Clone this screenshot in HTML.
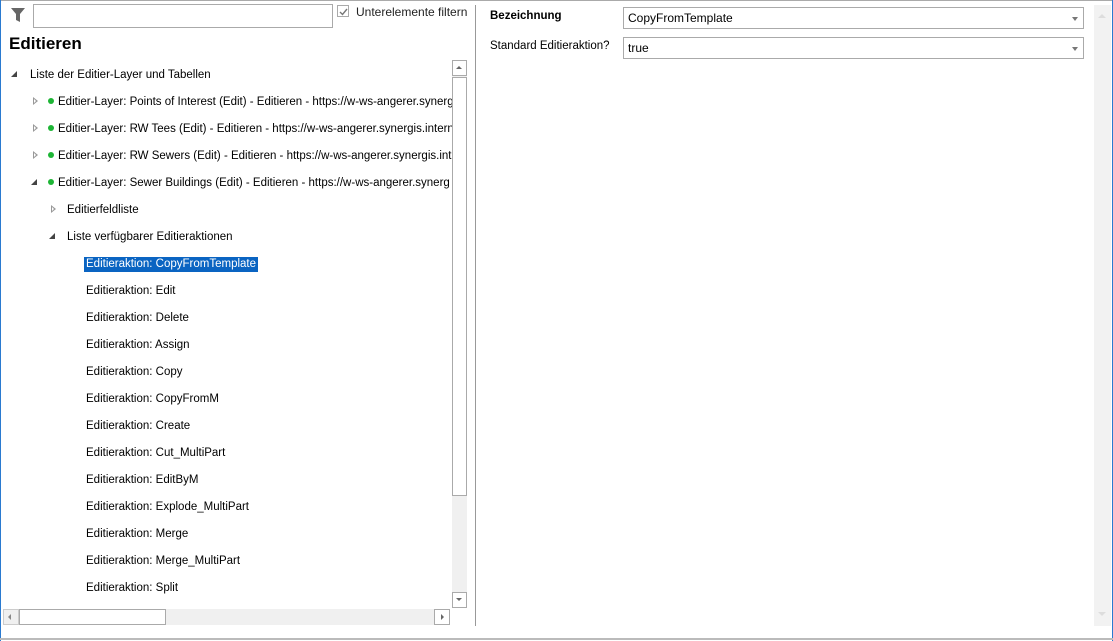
<!DOCTYPE html>
<html><head><meta charset="utf-8"><style>
*{margin:0;padding:0;box-sizing:border-box}
body{width:1113px;height:641px;background:#fff;position:relative;overflow:hidden;font-family:"Liberation Sans",sans-serif;font-size:11.5px;color:#000}
.a{position:absolute}
.row{position:absolute;white-space:nowrap;line-height:16px}
.t .row{margin-top:1px}
.dot{display:inline-block;width:6px;height:6px;border-radius:50%;background:#1db535;margin-right:4px;vertical-align:1px}
.tri{position:absolute;width:0;height:0}
.exp{border-left:6px solid transparent;border-bottom:6px solid #444}
.col{border-top:4px solid transparent;border-bottom:4px solid transparent;border-left:5px solid #999}
.col:after{content:"";position:absolute;left:-4px;top:-2px;border-top:2px solid transparent;border-bottom:2px solid transparent;border-left:2.5px solid #fff}
.sel{background:#0a64c2;color:#fff;padding:0 2px;margin-left:-2px;display:inline-block;line-height:15px}
.combo{position:absolute;border:1px solid #aaa;height:22px;padding-left:4px;line-height:20px;font-size:12px}
.combo:after{content:"";position:absolute;right:5px;top:9px;border-left:3px solid transparent;border-right:3px solid transparent;border-top:4px solid #777}
</style></head><body>
<div class="a" style="left:0;top:0;width:1113px;height:1px;background:#aaa"></div>
<div class="a" style="left:0;top:0;width:1px;height:641px;background:#2a7ad0"></div>
<div class="a" style="right:0;top:0;width:1px;height:641px;background:#2a7ad0"></div>
<div class="a" style="left:0;top:638px;width:1113px;height:2px;background:#bbb"></div>
<svg class="a" style="left:10px;top:6px" width="16" height="18"><path d="M1 2h14l-5 6v8l-4-2v-6z" fill="#666"/></svg>
<div class="a" style="left:33px;top:4px;width:300px;height:24px;border:1px solid #aaa"></div>
<div class="a" style="left:337px;top:5px;width:12px;height:12px;border:1px solid #aaa"></div>
<svg class="a" style="left:338px;top:6px" width="11" height="11"><path d="M2 6l2.5 2.5L9 3" stroke="#777" stroke-width="1.4" fill="none"/></svg>
<div class="row" style="left:356px;top:4px;font-size:12px;color:#222">Unterelemente filtern</div>
<div class="row" style="left:9px;top:34px;font-size:17px;font-weight:bold;line-height:20px">Editieren</div>
<div class="t">
<div class="tri exp" style="left:11px;top:71px"></div>
<div class="row" style="left:30px;top:66px">Liste der Editier-Layer und Tabellen</div>
<div class="tri col" style="left:33px;top:97px"></div>
<div class="row" style="left:48px;top:93px"><span class="dot"></span>Editier-Layer: Points of Interest (Edit) - Editieren - https://w-ws-angerer.synerg</div>
<div class="tri col" style="left:33px;top:124px"></div>
<div class="row" style="left:48px;top:120px"><span class="dot"></span>Editier-Layer: RW Tees (Edit) - Editieren - https://w-ws-angerer.synergis.intern</div>
<div class="tri col" style="left:33px;top:151px"></div>
<div class="row" style="left:48px;top:147px"><span class="dot"></span>Editier-Layer: RW Sewers (Edit) - Editieren - https://w-ws-angerer.synergis.int</div>
<div class="tri exp" style="left:31px;top:179px"></div>
<div class="row" style="left:48px;top:174px"><span class="dot"></span>Editier-Layer: Sewer Buildings (Edit) - Editieren - https://w-ws-angerer.synerg</div>
<div class="tri col" style="left:51px;top:205px"></div>
<div class="row" style="left:67px;top:201px">Editierfeldliste</div>
<div class="tri exp" style="left:49px;top:233px"></div>
<div class="row" style="left:67px;top:228px">Liste verfügbarer Editieraktionen</div>
<div class="row" style="left:86px;top:255px"><span class="sel">Editieraktion: CopyFromTemplate</span></div>
<div class="row" style="left:86px;top:282px">Editieraktion: Edit</div>
<div class="row" style="left:86px;top:309px">Editieraktion: Delete</div>
<div class="row" style="left:86px;top:336px">Editieraktion: Assign</div>
<div class="row" style="left:86px;top:363px">Editieraktion: Copy</div>
<div class="row" style="left:86px;top:390px">Editieraktion: CopyFromM</div>
<div class="row" style="left:86px;top:417px">Editieraktion: Create</div>
<div class="row" style="left:86px;top:444px">Editieraktion: Cut_MultiPart</div>
<div class="row" style="left:86px;top:471px">Editieraktion: EditByM</div>
<div class="row" style="left:86px;top:498px">Editieraktion: Explode_MultiPart</div>
<div class="row" style="left:86px;top:525px">Editieraktion: Merge</div>
<div class="row" style="left:86px;top:552px">Editieraktion: Merge_MultiPart</div>
<div class="row" style="left:86px;top:579px">Editieraktion: Split</div>
</div>
<div class="a" style="left:452px;top:60px;width:15px;height:548px;background:#f0f0f0"></div>
<div class="a" style="left:452px;top:60px;width:15px;height:16px;border:1px solid #aaa;background:#fff"></div>
<div class="a" style="left:456px;top:66px;border-left:3px solid transparent;border-right:3px solid transparent;border-bottom:3px solid #666"></div>
<div class="a" style="left:452px;top:77px;width:15px;height:419px;border:1px solid #aaa;background:#fff"></div>
<div class="a" style="left:452px;top:592px;width:15px;height:16px;border:1px solid #aaa;background:#fff"></div>
<div class="a" style="left:456px;top:598px;border-left:3px solid transparent;border-right:3px solid transparent;border-top:3px solid #666"></div>
<div class="a" style="left:3px;top:609px;width:447px;height:16px;background:#f0f0f0"></div>
<div class="a" style="left:3px;top:609px;width:16px;height:16px;border:1px solid #ccc"></div>
<div class="a" style="left:8px;top:614px;border-top:3px solid transparent;border-bottom:3px solid transparent;border-right:3px solid #888"></div>
<div class="a" style="left:19px;top:609px;width:147px;height:16px;border:1px solid #aaa;background:#fff"></div>
<div class="a" style="left:434px;top:609px;width:16px;height:16px;border:1px solid #aaa;background:#fff"></div>
<div class="a" style="left:441px;top:614px;border-top:3px solid transparent;border-bottom:3px solid transparent;border-left:3px solid #666"></div>
<div class="a" style="left:475px;top:5px;width:1px;height:621px;background:#999"></div>
<div class="row" style="left:490px;top:8px;font-weight:bold;font-size:11.5px">Bezeichnung</div>
<div class="combo" style="left:623px;top:7px;width:461px">CopyFromTemplate</div>
<div class="row" style="left:490px;top:38px;font-size:11.5px">Standard Editieraktion?</div>
<div class="combo" style="left:623px;top:37px;width:461px">true</div>
<div class="a" style="left:1094px;top:5px;width:17px;height:621px;background:#f2f2f2"></div>
<div class="a" style="left:1098px;top:14px;border-left:4px solid transparent;border-right:4px solid transparent;border-bottom:4px solid #ddd"></div>
<div class="a" style="left:1098px;top:612px;border-left:4px solid transparent;border-right:4px solid transparent;border-top:4px solid #ddd"></div>
</body></html>
